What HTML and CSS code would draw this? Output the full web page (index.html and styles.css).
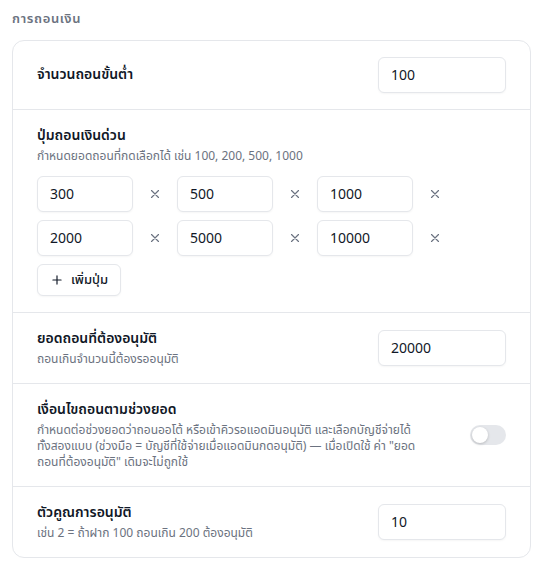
FILE: index.html
```html
<!DOCTYPE html>
<html lang="th">
<head>
<meta charset="UTF-8">
<meta name="viewport" content="width=device-width, initial-scale=1.0">
<title>การถอนเงิน</title>
<link rel="stylesheet" href="styles.css">
</head>
<body>
<div class="section">
    <h3 class="section-title">การถอนเงิน</h3>
    <div class="card">
        <div class="row">
            <div class="row-text">
                <div class="label">จำนวนถอนขั้นต่ำ</div>
            </div>
            <input type="text" class="field" value="100">
        </div>

        <div class="row row-block">
            <div class="row-text">
                <div class="label">ปุ่มถอนเงินด่วน</div>
                <div class="desc">กำหนดยอดถอนที่กดเลือกได้ เช่น 100, 200, 500, 1000</div>
            </div>
            <div class="quick-grid">
                <div class="quick-item">
                    <input type="text" class="field field-sm" value="300">
                    <button class="remove"><svg width="14" height="14" viewBox="0 0 24 24"><path d="M18 6 6 18M6 6l12 12"/></svg></button>
                </div>
                <div class="quick-item">
                    <input type="text" class="field field-sm" value="500">
                    <button class="remove"><svg width="14" height="14" viewBox="0 0 24 24"><path d="M18 6 6 18M6 6l12 12"/></svg></button>
                </div>
                <div class="quick-item">
                    <input type="text" class="field field-sm" value="1000">
                    <button class="remove"><svg width="14" height="14" viewBox="0 0 24 24"><path d="M18 6 6 18M6 6l12 12"/></svg></button>
                </div>
                <div class="quick-item">
                    <input type="text" class="field field-sm" value="2000">
                    <button class="remove"><svg width="14" height="14" viewBox="0 0 24 24"><path d="M18 6 6 18M6 6l12 12"/></svg></button>
                </div>
                <div class="quick-item">
                    <input type="text" class="field field-sm" value="5000">
                    <button class="remove"><svg width="14" height="14" viewBox="0 0 24 24"><path d="M18 6 6 18M6 6l12 12"/></svg></button>
                </div>
                <div class="quick-item">
                    <input type="text" class="field field-sm" value="10000">
                    <button class="remove"><svg width="14" height="14" viewBox="0 0 24 24"><path d="M18 6 6 18M6 6l12 12"/></svg></button>
                </div>
            </div>
            <button class="add-btn">
                <svg width="14" height="14" viewBox="0 0 24 24"><path d="M5 12h14M12 5v14"/></svg>
                เพิ่มปุ่ม
            </button>
        </div>

        <div class="row">
            <div class="row-text">
                <div class="label">ยอดถอนที่ต้องอนุมัติ</div>
                <div class="desc">ถอนเกินจำนวนนี้ต้องรออนุมัติ</div>
            </div>
            <input type="text" class="field" value="20000">
        </div>

        <div class="row">
            <div class="row-text">
                <div class="label">เงื่อนไขถอนตามช่วงยอด</div>
                <div class="desc">กำหนดต่อช่วงยอดว่าถอนออโต้ หรือเข้าคิวรอแอดมินอนุมัติ และเลือกบัญชีจ่ายได้<br>ทั้งสองแบบ (ช่วงมือ = บัญชีที่ใช้จ่ายเมื่อแอดมินกดอนุมัติ) — เมื่อเปิดใช้ ค่า "ยอด<br>ถอนที่ต้องอนุมัติ" เดิมจะไม่ถูกใช้</div>
            </div>
            <span class="toggle"><span class="knob"></span></span>
        </div>

        <div class="row">
            <div class="row-text">
                <div class="label">ตัวคูณการอนุมัติ</div>
                <div class="desc">เช่น 2 = ถ้าฝาก 100 ถอนเกิน 200 ต้องอนุมัติ</div>
            </div>
            <input type="text" class="field" value="10">
        </div>
    </div>
</div>
</body>
</html>
```

FILE: styles.css
```css
body {
    margin: 0;
    padding: 0;
    background-color: #ffffff;
    font-family: "Noto Sans Thai", "Noto Sans", sans-serif;
    color: #111827;
}
.section {
    padding: 10px 12px 12px 12px;
}
.section-title {
    margin: 0 0 12px 0;
    font-size: 13px;
    font-weight: 600;
    letter-spacing: 0.05em;
    color: #6b7280;
    line-height: 18px;
}
.card {
    border: 1px solid #e5e7eb;
    border-radius: 12px;
    background-color: #ffffff;
}
.row {
    display: flex;
    align-items: center;
    justify-content: space-between;
    gap: 16px;
    padding: 16px 24px;
    border-bottom: 1px solid #e5e7eb;
}
.row:last-child {
    border-bottom: none;
}
.row-block {
    display: block;
}
.row-text {
    flex: 1;
    min-width: 0;
}
.label {
    font-size: 14px;
    font-weight: 600;
    line-height: 20px;
    color: #111827;
}
.desc {
    margin-top: 2px;
    font-size: 12px;
    line-height: 16px;
    color: #6b7280;
}
.field {
    box-sizing: border-box;
    width: 128px;
    height: 36px;
    padding: 0 12px;
    border: 1px solid #e5e7eb;
    border-radius: 6px;
    box-shadow: 0 1px 2px rgba(0, 0, 0, 0.04);
    font-family: "Noto Sans Thai", "Noto Sans", sans-serif;
    font-size: 14px;
    color: #111827;
    background-color: #ffffff;
    outline: none;
    flex-shrink: 0;
}
.quick-grid {
    display: grid;
    grid-template-columns: repeat(3, 140px);
    row-gap: 8px;
    margin-top: 12px;
}
.quick-item {
    display: flex;
    align-items: center;
}
.field-sm {
    width: 96px;
}
.remove {
    display: flex;
    align-items: center;
    justify-content: center;
    width: 20px;
    height: 20px;
    margin: 0 12px;
    padding: 0;
    border: none;
    background: none;
    color: #6b7280;
    cursor: pointer;
}
.remove svg,
.add-btn svg {
    fill: none;
    stroke: currentColor;
    stroke-width: 2;
    stroke-linecap: round;
    stroke-linejoin: round;
}
.add-btn {
    display: flex;
    align-items: center;
    gap: 7px;
    height: 32px;
    margin-top: 8px;
    padding: 0 12px;
    border: 1px solid #e5e7eb;
    border-radius: 6px;
    background-color: #ffffff;
    box-shadow: 0 1px 2px rgba(0, 0, 0, 0.04);
    font-family: "Noto Sans Thai", "Noto Sans", sans-serif;
    font-size: 13px;
    font-weight: 500;
    color: #111827;
    cursor: pointer;
}
.toggle {
    position: relative;
    flex-shrink: 0;
    width: 36px;
    height: 20px;
    border-radius: 10px;
    background-color: #e5e7eb;
}
.knob {
    position: absolute;
    top: 2px;
    left: 2px;
    width: 16px;
    height: 16px;
    border-radius: 50%;
    background-color: #ffffff;
    box-shadow: 0 1px 3px rgba(0, 0, 0, 0.2);
}
```
